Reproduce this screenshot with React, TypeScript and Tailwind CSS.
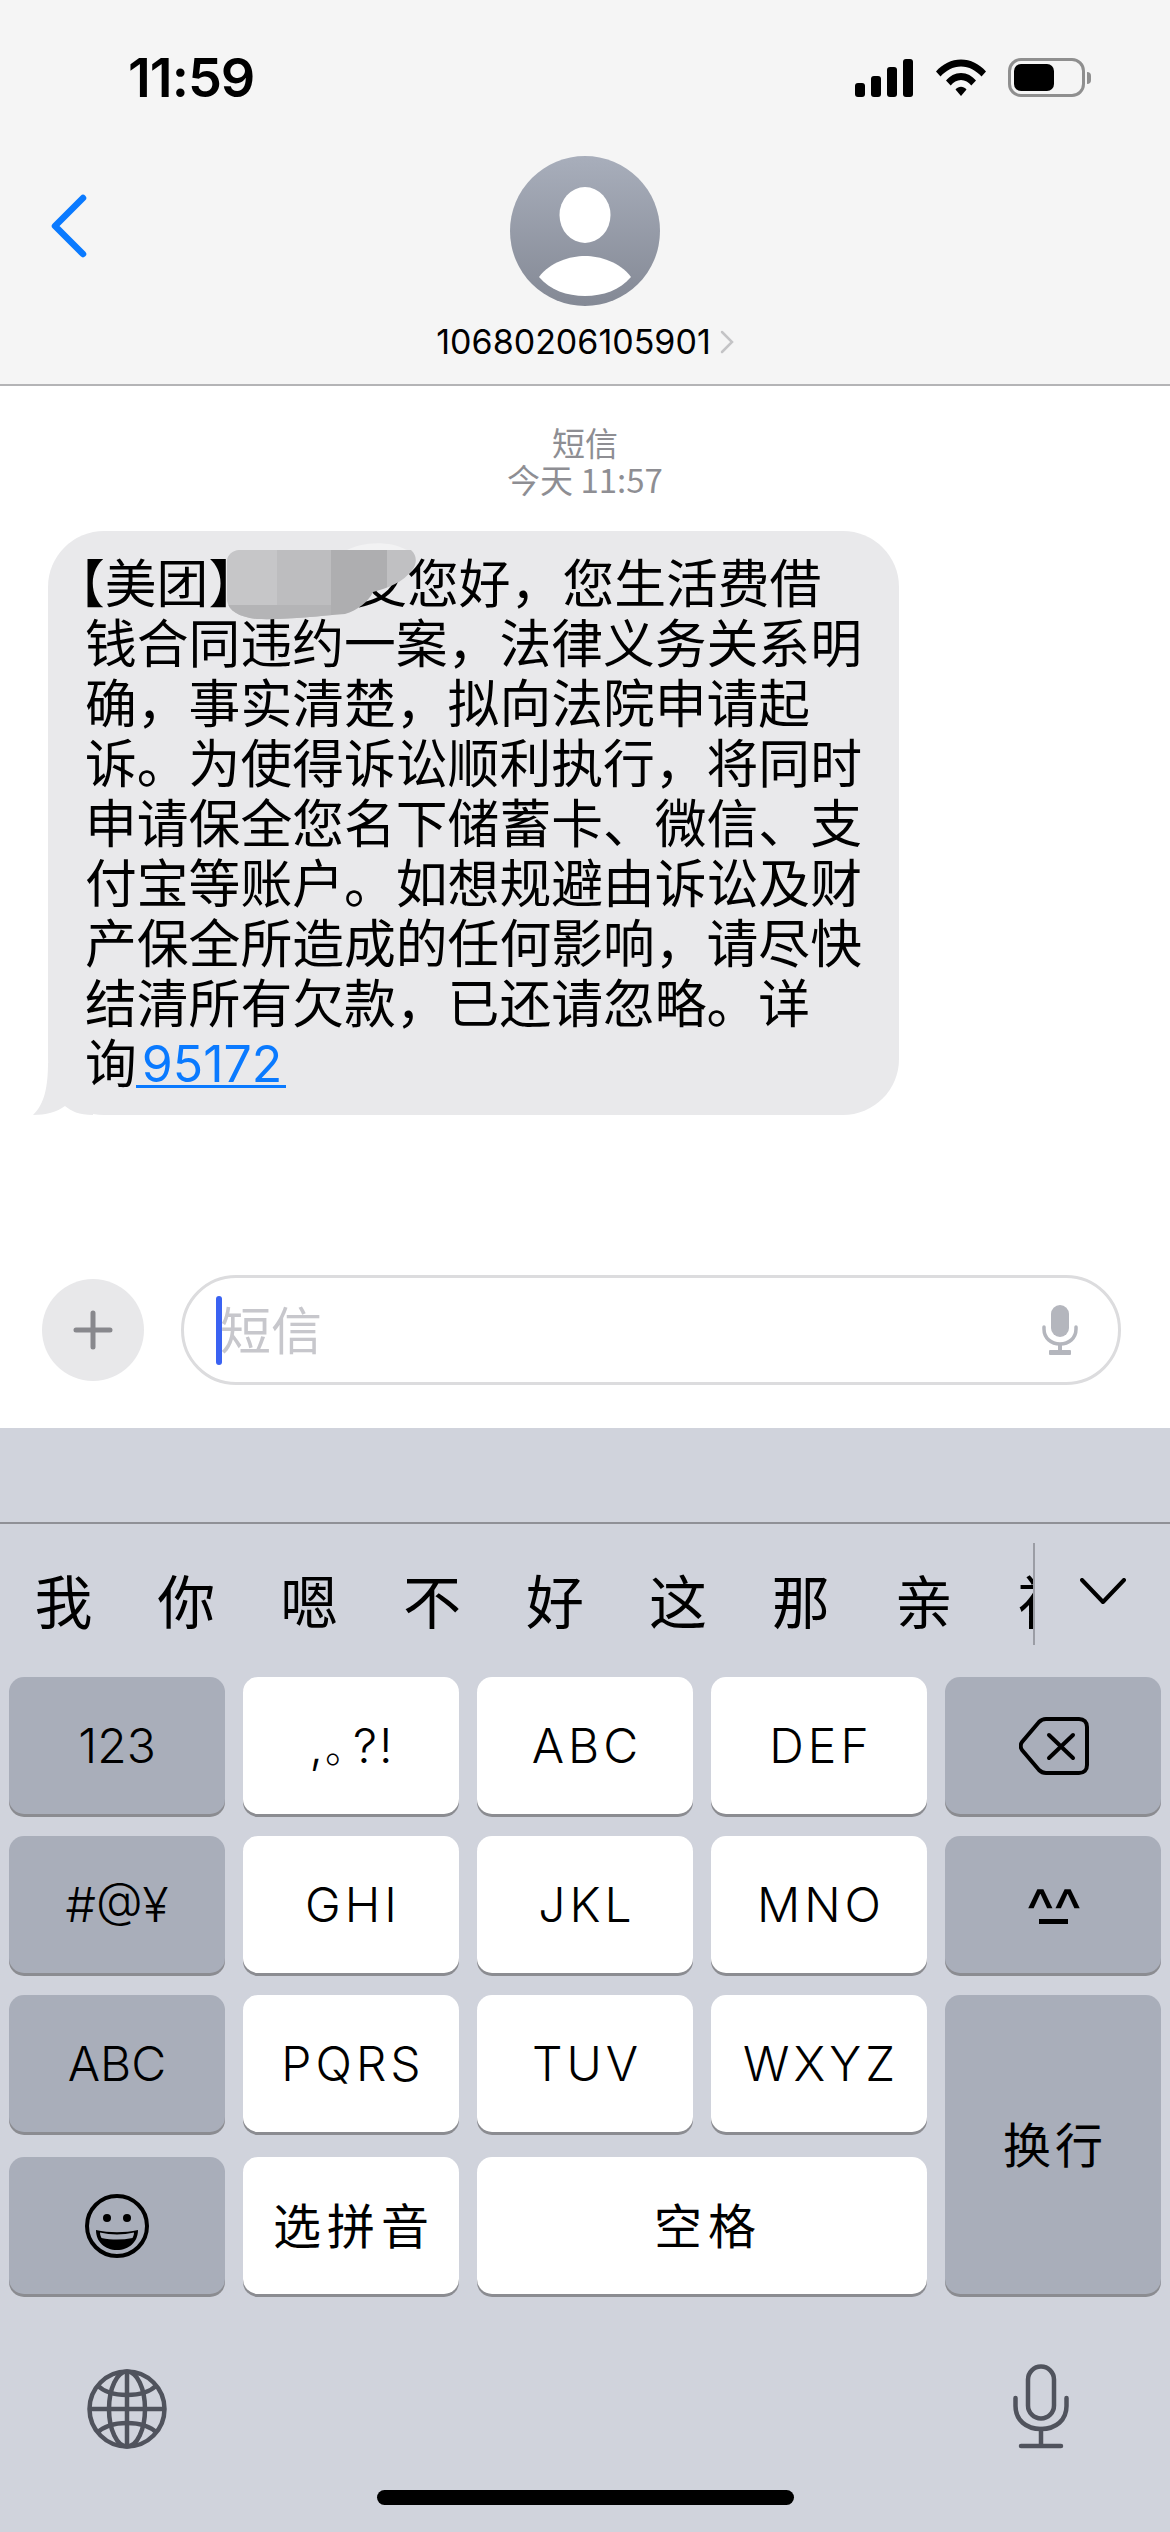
import React from "react";

const cjk = "font-['Noto_Sans_CJK_SC','Inter',sans-serif]";
const latin = "font-['Inter','Noto_Sans_CJK_SC',sans-serif]";

const grayKey = "bg-[#a9aeba] text-black";
const whiteKey = "bg-white text-black";

type KeyProps = {
  className?: string;
  children: React.ReactNode;
};

const Key = ({ className, children }: KeyProps) => {
  return (
    <div
      className={`flex items-center justify-center rounded-[15px] shadow-[0_3px_0_#8b8c91] ${className}`}
    >
      {children}
    </div>
  );
};

const StatusIcons = () => {
  return (
    <div className="flex items-center">
      <svg width="58" height="38" viewBox="0 0 58 38" fill="#000">
        <rect x="0" y="24" width="10" height="14" rx="3" />
        <rect x="16" y="17" width="10" height="21" rx="3" />
        <rect x="32" y="8" width="10" height="30" rx="3" />
        <rect x="48" y="0" width="10" height="38" rx="3" />
      </svg>
      <svg className="ml-[23px]" width="50" height="38" viewBox="0 0 50 38" fill="#000">
        <path d="M0 12.5C6.5 5 15.5 0.5 25 0.5S43.5 5 50 12.5L45.5 17.5C40 11.5 33 7.5 25 7.5S10 11.5 4.500 17.500Z" />
        <path d="M10 21.500C13.800 17 19 14 25 14S36.200 17 40 21.500L35.300 26.500C32.700 23.300 29 21 25 21S17.300 23.300 14.700 26.500Z" />
        <path d="M19.500 30.500C21 28.800 23 27.800 25 27.800S29 28.800 30.500 30.500L25 37Z" />
      </svg>
      <div className="ml-[22px] flex items-center">
        <div className="flex h-[39px] w-[77px] items-center rounded-[13px] border-[3px] border-[#8f8f8f] pl-[3px]">
          <div className="h-[27px] w-[40px] rounded-[7px] bg-black"></div>
        </div>
        <div className="ml-[2px] h-[12px] w-[4px] rounded-r-full bg-[#8f8f8f]"></div>
      </div>
    </div>
  );
};

const MessageBubble = () => {
  return (
    <div className="relative ml-[48px] mt-[33px] h-[584px] w-[851px] rounded-[56px] bg-[#e9e9eb] pl-[37px] pt-[20px] text-[51.800px] leading-[60px] text-black">
      <svg
        className="absolute bottom-0 left-[-15px]"
        width="60"
        height="52"
        viewBox="0 0 60 52"
        fill="#e9e9eb"
      >
        <path d="M15 0C15 22 12 41 0 52C13 52 24 49 32 43C38 48 46 52 60 52V0Z" />
      </svg>
      <div className={`relative ${cjk} whitespace-nowrap`}>
        <div className="ml-[-32px] flex">
          <span>【美团】</span>
          <span className="ml-[95px]">支您好，您生活费借</span>
        </div>
        <div>钱合同违约一案，法律义务关系明</div>
        <div>确，事实清楚，拟向法院申请起</div>
        <div>诉。为使得诉讼顺利执行，将同时</div>
        <div>申请保全您名下储蓄卡、微信、支</div>
        <div>付宝等账户。如想规避由诉讼及财</div>
        <div>产保全所造成的任何影响，请尽快</div>
        <div>结清所有欠款，已还请忽略。详</div>
        <div className="flex">
          <span>询</span>
          <span
            className={`${latin} ml-[-1px] h-[57px] border-b-[3px] border-[#0a7aff] pl-[6px] pr-[4px] pt-[3px] text-[#0a7aff] text-[50px] leading-[60px]`}
          >
            95172
          </span>
        </div>
      </div>
      {/* mosaic over the sender's name */}
      <svg
        className="absolute left-[179px] top-[10px]"
        width="192"
        height="80"
        viewBox="0 0 192 80"
      >
        <defs>
          <clipPath id="blob">
            <path d="M12 9H184C190 14 190 22 186 28C176 42 160 47 146 51C142 60 130 70 118 73C90 75 60 79 30 78C12 76 2 70 0 60V20C0 14 6 9 12 9Z" />
          </clipPath>
        </defs>
        <path d="M120 9C132 2 160 -2 180 9Z" fill="#f2f2f3" />
        <g clipPath="url(#blob)">
          <rect x="0" y="0" width="50" height="80" fill="#c6c6c8" />
          <rect x="50" y="0" width="54" height="80" fill="#bdbdbf" />
          <rect x="104" y="0" width="56" height="80" fill="#aeaeb0" />
          <rect x="160" y="0" width="32" height="80" fill="#c0c0c2" />
          <rect x="0" y="64" width="104" height="16" fill="#b4b4b6" />
        </g>
      </svg>
    </div>
  );
};

const InputBar = () => {
  return (
    <div className="flex items-center pl-[42px]">
      <div className="flex h-[102px] w-[102px] items-center justify-center rounded-full bg-[#e8e8ea]">
        <svg width="40" height="40" viewBox="0 0 40 40" stroke="#88888d" strokeWidth="5" strokeLinecap="round">
          <path d="M20 3V37M3 20H37" />
        </svg>
      </div>
      <div className="ml-[37px] flex h-[110px] w-[940px] items-center rounded-[55px] border-[3px] border-[#dcdcde] pl-[32px] pr-[40px]">
        <div className="h-[69px] w-[6px] rounded-full bg-[#3a62f2]"></div>
        <span className={`${cjk} mb-[4px] ml-[-2px] text-[51px] leading-none text-[#c7c7cc]`}>短信</span>
        <svg className="ml-auto" width="36" height="50" viewBox="0 0 36 50" fill="#b4b6bd">
          <rect x="9" y="0" width="18" height="32" rx="9" />
          <path
            d="M2 22V24C2 33 9 39 18 39S34 33 34 24V22"
            fill="none"
            stroke="#b4b6bd"
            strokeWidth="3.500"
            strokeLinecap="round"
          />
          <rect x="16" y="38" width="4" height="9" />
          <rect x="7" y="45" width="22" height="5" rx="1" />
        </svg>
      </div>
    </div>
  );
};

const candidates = ["我", "你", "嗯", "不", "好", "这", "那", "亲", "祝"];

const CandidateRow = () => {
  return (
    <div className="flex h-[153px] items-start">
      <div className="mt-[19px] flex h-[102px] w-[1033px] items-center overflow-hidden pl-[2px]">
        {candidates.map((c) => (
          <span
            key={c}
            className={`${cjk} flex w-[122.900px] flex-none justify-center pt-[10px] text-[58px] leading-none text-black`}
          >
            {c}
          </span>
        ))}
      </div>
      <div className="mt-[19px] h-[102px] w-[2px] bg-[#9b9da5]"></div>
      <svg className="ml-[45px] mt-[54px]" width="46" height="26" viewBox="0 0 46 26" fill="none" stroke="#000" strokeWidth="4" strokeLinecap="round" strokeLinejoin="round">
        <path d="M2 2L23 24L44 2" />
      </svg>
    </div>
  );
};

const KeyGrid = () => {
  const letter = `${latin} pl-[4px] text-[48px] leading-none font-light tracking-[4px]`;
  const side = `${latin} text-[48px] leading-none font-light`;
  const han = `${cjk} mb-[6px] text-[48px] leading-none`;
  return (
    <div className="grid grid-cols-[repeat(5,216px)] grid-rows-[137px_137px_137px_140px] gap-x-[18px] gap-y-[22px] pl-[9px]">
      <Key className={grayKey}>
        <span className={side}>123</span>
      </Key>
      <Key className={whiteKey}>
        <span className={`${latin} flex items-baseline pl-[2px] text-[48px] leading-none font-light tracking-[2px]`}>
          ,<span className="w-[28px] text-[40px]">。</span>?!
        </span>
      </Key>
      <Key className={whiteKey}>
        <span className={letter}>ABC</span>
      </Key>
      <Key className={whiteKey}>
        <span className={letter}>DEF</span>
      </Key>
      <Key className={grayKey}>
        <svg className="ml-[2px]" width="70" height="58" viewBox="0 0 70 58" fill="none" stroke="#000" strokeWidth="4" strokeLinecap="round" strokeLinejoin="round">
          <path d="M27 2H60C65 2 68 5 68 10V48C68 53 65 56 60 56H27C24 56 22 55 20 53L3 33C1 30 1 28 3 25L20 5C22 3 24 2 27 2Z" />
          <path d="M30 18L54 41M54 18L30 41" />
        </svg>
      </Key>

      <Key className={grayKey}>
        <span className={side}>#@¥</span>
      </Key>
      <Key className={whiteKey}>
        <span className={letter}>GHI</span>
      </Key>
      <Key className={whiteKey}>
        <span className={letter}>JKL</span>
      </Key>
      <Key className={whiteKey}>
        <span className={letter}>MNO</span>
      </Key>
      <Key className={grayKey}>
        <div className="mb-[6px] flex flex-col items-center">
          <span className={`${latin} h-[26px] text-[62px] leading-[64px] tracking-[-2px]`}>^^</span>
          <div className="mt-[14px] h-[5px] w-[29px] bg-black"></div>
        </div>
      </Key>

      <Key className={grayKey}>
        <span className={side}>ABC</span>
      </Key>
      <Key className={whiteKey}>
        <span className={letter}>PQRS</span>
      </Key>
      <Key className={whiteKey}>
        <span className={letter}>TUV</span>
      </Key>
      <Key className={whiteKey}>
        <span className={letter}>WXYZ</span>
      </Key>
      <Key className={`${grayKey} row-span-2`}>
        <span className={`${han} pl-[4px] tracking-[4px]`}>换行</span>
      </Key>

      <Key className={`${grayKey} mt-[3px]`}>
        <svg width="64" height="64" viewBox="0 0 64 64">
          <circle cx="32" cy="32" r="30" fill="none" stroke="#000" strokeWidth="4" />
          <circle cx="22" cy="24" r="4" fill="#000" />
          <circle cx="42" cy="24" r="4" fill="#000" />
          <path d="M11 36C24 39 40 39 53 36C53 48 44 56 32 56S11 48 11 36Z" fill="#000" />
          <path d="M15 38.500C26 41 38 41 49 38.500C49 40.500 48.500 42 47.500 44C37 46 27 46 16.500 44C15.500 42 15 40.500 15 38.500Z" fill="#a9aeba" />
        </svg>
      </Key>
      <Key className={`${whiteKey} mt-[3px]`}>
        <span className={`${han} pl-[6px] tracking-[6px]`}>选拼音</span>
      </Key>
      <Key className={`${whiteKey} col-span-2 mt-[3px]`}>
        <span className={`${han} pl-[12px] tracking-[6px]`}>空格</span>
      </Key>
    </div>
  );
};

const BottomRow = () => {
  return (
    <div className="flex h-[232px] flex-col">
      <div className="mt-[70px] flex items-end justify-between pl-[87px] pr-[101px]">
        <svg width="80" height="80" viewBox="0 0 80 80" fill="none" stroke="#50535d" strokeWidth="4.500">
          <circle cx="40" cy="40" r="37.500" />
          <ellipse cx="40" cy="40" rx="18" ry="37.500" />
          <path d="M40 2.500V77.500M2.500 40H77.500" />
          <path d="M10 16C18 24 29 26 40 26S62 24 70 16" />
          <path d="M10 64C18 56 29 54 40 54S62 56 70 64" />
        </svg>
        <svg width="56" height="85" viewBox="0 0 56 85" fill="none" stroke="#50535d" strokeWidth="4.500" strokeLinecap="round">
          <rect x="15" y="2.500" width="26" height="52" rx="13" />
          <path d="M2.500 34V42C2.500 56 13 65 28 65S53.500 56 53.500 42V34" />
          <path d="M28 65V81M8 82H48" />
        </svg>
      </div>
      <div className="ml-[377px] mt-[41px] h-[15px] w-[417px] rounded-full bg-black"></div>
    </div>
  );
};

export default function App() {
  return (
    <div className="flex h-[2532px] w-[1170px] flex-col overflow-hidden bg-white">
      <header className="h-[386px] border-b-[2px] border-[#b4b4b6] bg-[#f5f5f5]">
        <div className="flex h-[156px] items-start justify-between pl-[128px] pr-[79px] pt-[58px]">
          <span className={`${latin} text-[54px] font-semibold leading-[40px] tracking-[-1px] text-black`}>
            11:59
          </span>
          <StatusIcons />
        </div>
        <div className="grid grid-cols-[1fr_auto_1fr]">
          <svg className="ml-[50px] mt-[38px]" width="38" height="64" viewBox="0 0 38 64" fill="none" stroke="#0a7aff" strokeWidth="6.500" strokeLinecap="round" strokeLinejoin="round">
            <path d="M33 4L5 32L33 60" />
          </svg>
          <div className="flex flex-col items-center">
            <div className="relative h-[150px] w-[150px] overflow-hidden rounded-full bg-gradient-to-b from-[#a8aebb] to-[#848995]">
              <svg width="150" height="150" viewBox="0 0 150 150" fill="#fff">
                <ellipse cx="75" cy="59" rx="25.500" ry="28" />
                <path d="M29 121C40 106 60 100 75 100S110 106 121 121C110 134 93 140 75 140S40 134 29 121Z" />
              </svg>
            </div>
            <div className="mt-[21px] flex items-center">
              <span className={`${latin} text-[34px] leading-[30px] text-black`}>10680206105901</span>
              <svg className="ml-[9px]" width="14" height="24" viewBox="0 0 14 24" fill="none" stroke="#c4c4c6" strokeWidth="2.500" strokeLinecap="round">
                <path d="M2 2L12 12L2 22" />
              </svg>
            </div>
          </div>
          <div></div>
        </div>
      </header>

      <div className={`${cjk} mt-[38px] flex flex-col items-center text-[33px] leading-[37px] text-[#8e8e93]`}>
        <span>短信</span>
        <span>今天 11:57</span>
      </div>
      <MessageBubble />

      <div className="mt-[160px]">
        <InputBar />
      </div>

      <div className="mt-[43px] flex-1 bg-[#d0d3dc]">
        <div className="h-[96px] border-b-[2px] border-[#8f9096]"></div>
        <CandidateRow />
        <KeyGrid />
        <BottomRow />
      </div>
    </div>
  );
}
